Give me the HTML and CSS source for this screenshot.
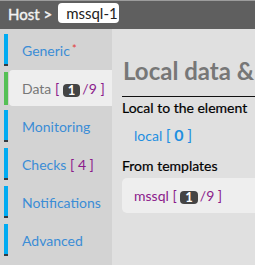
FILE: index.html
```html
<!DOCTYPE html>
<html>
<head>
<meta charset="utf-8">
<link rel="stylesheet" href="styles.css">
</head>
<body>
<header class="topbar">
  <span class="host">Host &gt;</span>
  <span class="hostname">mssql-1</span>
</header>
<div class="main">
  <nav class="sidebar">
    <div class="tab"><span class="bar"></span><a class="label"><span>Generic<span class="req">*</span></span></a></div>
    <div class="tab active"><span class="bar green"></span><a class="label"><span>Data <span class="br">[</span> <span class="badge">1</span><span class="pp">/9</span> <span class="br">]</span></span></a></div>
    <div class="tab"><span class="bar"></span><a class="label"><span>Monitoring</span></a></div>
    <div class="tab"><span class="bar"></span><a class="label"><span>Checks <span class="br">[</span> <span class="pp">4</span> <span class="br">]</span></span></a></div>
    <div class="tab"><span class="bar"></span><a class="label"><span>Notifications</span></a></div>
    <div class="tab"><span class="bar"></span><a class="label"><span>Advanced</span></a></div>
  </nav>
  <section class="content">
    <h1 class="title">Local data &amp; templates</h1>
    <hr class="rule">
    <h2 class="sub">Local to the element</h2>
    <div class="local">local <span class="bbr">[</span> <span class="zero">0</span> <span class="bbr">]</span></div>
    <h2 class="sub sub2">From templates</h2>
    <div class="tplbox"><span class="tpl">mssql <span class="br">[</span> <span class="badge">1</span><span class="pp">/9</span> <span class="br">]</span></span></div>
  </section>
</div>
</body>
</html>
```
FILE: styles.css
```css
html, body { margin: 0; padding: 0; }
body {
  width: 255px; height: 265px; overflow: hidden;
  font-family: Lato, "Noto Sans", sans-serif;
  background: #e0e0e0;
}
.topbar {
  height: 28px;
  border-top: 1px solid #9c9c9c;
  background: #5f5f5f;
  display: flex; align-items: center;
  padding-left: 8px;
}
.host {
  color: #f2f2f2; font-weight: 400; font-size: 15px; margin-right: 6px; margin-top: -3px;
  -webkit-text-stroke: 0.4px #f2f2f2;
}
.hostname {
  background: #fff; border-radius: 4px;
  height: 20px; width: 53px; padding-left: 8px;
  font-size: 15px; color: #222; line-height: 20px;
  margin-top: -4px;
}
.main { display: flex; height: 236px; }
.sidebar {
  width: 112px; flex: none; background: #d3d3d3;
  padding-top: 5px; box-sizing: border-box;
}
.tab { display: flex; height: 32px; margin-bottom: 6px; }
.bar {
  width: 4px; margin-left: 4px; flex: none;
  background: #00abf2; box-shadow: inset 0 -2px 0 #333a40;
}
.bar.green { background: #55c055; box-shadow: none; }
.label {
  flex: 1; display: flex; align-items: center;
  padding-left: 13px; font-size: 14px; color: #3b8dd6;
  white-space: nowrap; margin-left: 1px;
}
.tab.active { height: 36px; margin-top: -2px; margin-bottom: 4px; }
.tab.active .bar { margin-top: 2px; height: 33px; }
.tab.active .label { background: #eeeeee; color: #777; border-radius: 4px 0 0 4px; padding-left: 13px; }
.req { color: #e23a3a; font-size: 11px; margin-left: 2px; vertical-align: 3px; }
.br { color: #8b1a8b; }
.pp { color: #8b1a8b; }
.badge {
  display: inline-block; background: #444; color: #fff; font-weight: 700;
  border-radius: 4px; font-size: 13px; line-height: 13px; padding: 0 5px;
  margin-right: 2px; vertical-align: -1px;
}
.content { flex: 1; padding-left: 10px; overflow: hidden; min-width: 0; }
.title {
  margin: 27px 0 0 1px; font-size: 24px; font-weight: 700; color: #777;
  white-space: nowrap; line-height: 29px;
}
.rule { border: 0; border-top: 1px solid #111; margin: 11px 0 0 0; }
.sub { font-size: 14px; font-weight: 400; color: #000; margin: 2px 0 0 0; line-height: 17px; -webkit-text-stroke: 0.2px #000; }
.local { color: #1e8fe0; font-size: 14px; margin: 10px 0 0 12px; line-height: 18px; }
.bbr { font-size: 16px; }
.zero { font-size: 16px; font-weight: 700; }
.sub2 { margin-top: 12px; }
.tplbox {
  background: #eeeeee; border-radius: 5px 0 0 5px; margin: 4px 0 0 0;
  height: 35px; display: flex; align-items: center; padding-left: 12px;
}
.tpl { color: #8b1a8b; font-size: 14px; white-space: nowrap; }
```
